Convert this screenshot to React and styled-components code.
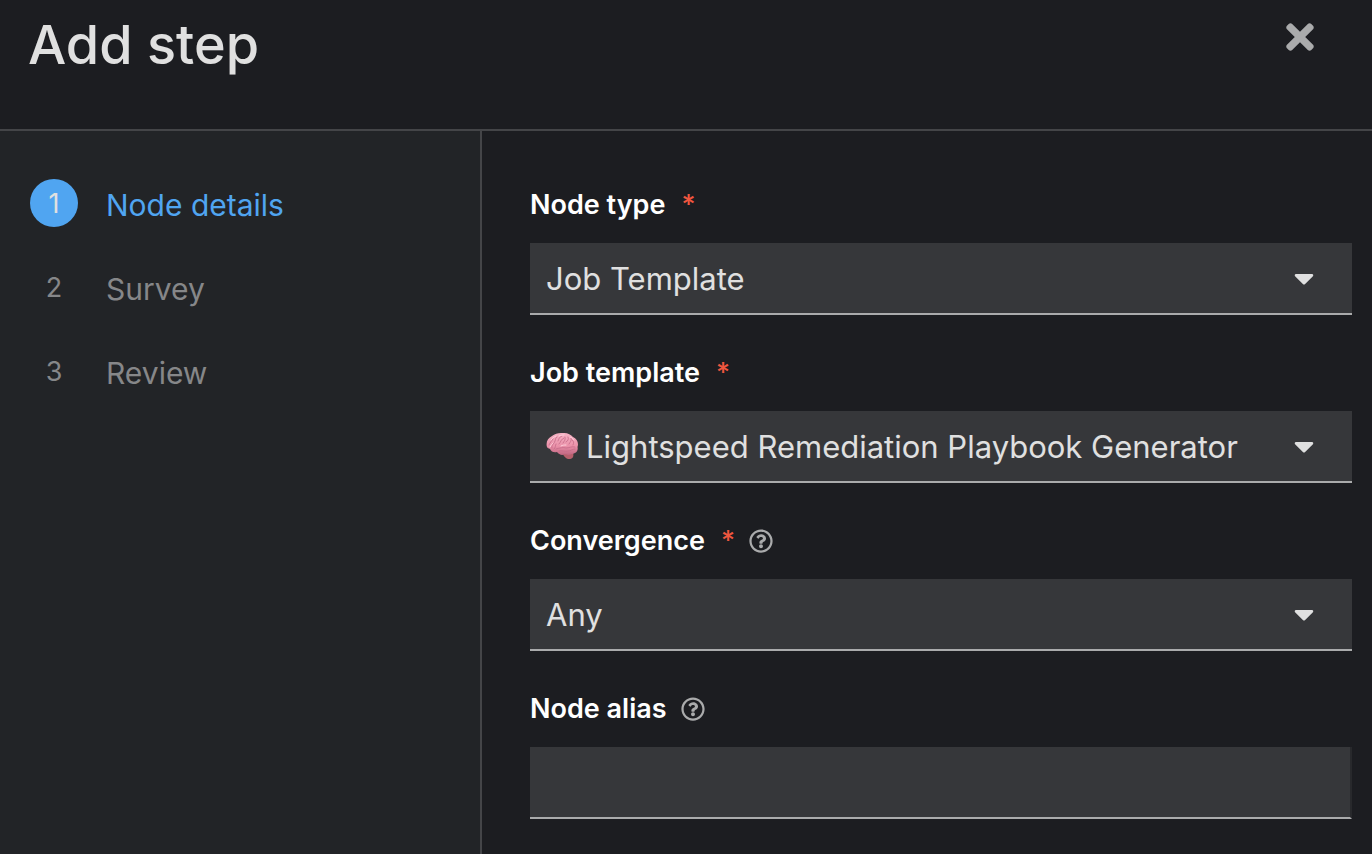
import React, { useState } from "react";
import styled, { createGlobalStyle } from "styled-components";
import { FaTimes, FaCaretDown, FaRegQuestionCircle } from "react-icons/fa";

const GlobalStyle = createGlobalStyle`
  *, *::before, *::after { box-sizing: border-box; }
  body {
    margin: 0;
    background: #1c1d21;
    color: #e0e0e0;
    font-family: Inter, "Liberation Sans", sans-serif;
  }
  button, input, select { font: inherit; color: inherit; }
`;

const Wizard = styled.div`
  display: flex;
  flex-direction: column;
  min-height: 100vh;
`;

const Header = styled.header`
  display: flex;
  align-items: flex-start;
  justify-content: space-between;
  padding: 12px 48px 52px 28px;
  border-bottom: 2px solid #444548;
`;

const Title = styled.h1`
  margin: 0;
  font-size: 54px;
  line-height: 65px;
  font-weight: 500;
`;

const CloseButton = styled.button`
  display: flex;
  justify-content: center;
  width: 48px;
  padding: 5px 0;
  border: 0;
  background: none;
  color: #aaabac;
  font-size: 40px;
  cursor: pointer;
`;

const Body = styled.div`
  display: flex;
  flex: 1;
`;

const Sidebar = styled.nav`
  flex: 0 0 482px;
  padding: 48px 30px;
  background: #222427;
  border-right: 2px solid #444548;
`;

const StepList = styled.ol`
  display: flex;
  flex-direction: column;
  gap: 36px;
  margin: 0;
  padding: 0;
  list-style: none;
`;

const StepButton = styled.button`
  display: flex;
  align-items: center;
  gap: 28px;
  padding: 0;
  border: 0;
  background: none;
  color: ${(p) => (p.$current ? "#50a5f1" : "#868789")};
  font-size: 30px;
  cursor: pointer;
`;

const StepNumber = styled.span`
  width: 48px;
  height: 48px;
  border-radius: 50%;
  background: ${(p) => (p.$current ? "#50a5f1" : "transparent")};
  color: ${(p) => (p.$current ? "#e0e0e0" : "inherit")};
  font-size: 27px;
  line-height: 50px;
  text-align: center;
`;

const StepName = styled.span`
  padding-top: 4px;
  line-height: 44px;
`;

const Form = styled.form`
  display: flex;
  flex: 1;
  min-width: 0;
  flex-direction: column;
  gap: 32px;
  padding: 48px 20px 32px 48px;
`;

const LabelRow = styled.div`
  display: flex;
  align-items: center;
  gap: 14px;
  height: 48px;
  margin-bottom: 16px;
  padding-top: 4px;
`;

const Label = styled.label`
  color: #fff;
  font-size: 27px;
  line-height: 32px;
  font-weight: 600;
`;

const Required = styled.span`
  margin-left: 16px;
  color: #f0563f;
  font-weight: 500;
`;

const HelpButton = styled.button`
  display: flex;
  padding: 0;
  border: 0;
  background: none;
  color: #aaabac;
  font-size: 24px;
  cursor: pointer;
`;

const SelectBox = styled.div`
  display: grid;
  align-items: center;
  height: 72px;
  background: #36373a;
  border-bottom: 2px solid #aaabac;

  > * { grid-area: 1 / 1; }
  > svg { pointer-events: none; }
`;

const Select = styled.select`
  width: 100%;
  height: 70px;
  padding: 0 64px 0 ${(p) => (p.$withIcon ? 56 : 16)}px;
  border: 0;
  border-radius: 0;
  appearance: none;
  background: transparent;
  font-size: 31px;

  option { background: #36373a; }
`;

const Caret = styled(FaCaretDown)`
  justify-self: end;
  margin-right: 32px;
  font-size: 32px;
`;

const BrainSvg = styled.svg`
  width: 32px;
  height: 32px;
  margin-left: 16px;
`;

const TextInput = styled.input`
  display: block;
  width: 100%;
  height: 72px;
  padding: 0 16px;
  border: 0;
  border-right: 2px solid #28292c;
  border-bottom: 2px solid #aaabac;
  border-radius: 0;
  background: #36373a;
  font-size: 31px;
`;

function BrainIcon() {
  return (
    <BrainSvg viewBox="0 0 32 32" aria-hidden="true">
      <defs>
        <linearGradient id="brain" x1="0" y1="0" x2="0" y2="1">
          <stop offset="0" stopColor="#f5b3c4" />
          <stop offset="0.6" stopColor="#ea91a9" />
          <stop offset="1" stopColor="#bf6580" />
        </linearGradient>
      </defs>
      <path d="M17 24c1 3 4 5.500 7 5 3-.5 4-3 3-6z" fill="#b8606d" />
      <path
        d="M1 17C-.5 12 2 8 6 6c3-2.500 7-3.500 11-3 4-.5 8 1.500 10 4 4 2 6 6 4.500 10 1 4-2 7-6 7-2 1.500-5 1-6.500 0-3 2-6 .5-8-2-3 1-6-.5-7-3-1.500-.5-2.500-1-3-2z"
        fill="url(#brain)"
      />
      <g fill="none" stroke="#c46b88" strokeWidth="0.8" strokeLinecap="round">
        <path d="M3 15c1-3 3-4 4-6M6 18c-1-3 2-4 3-7 1-2 0-3 2-4M10 14c-1 2 0 3-2 5M12 11c1-2 1-4 4-5M13 14c2-2 2-5 5-6M17 13c1-2 3-3 2-6M20 12c2-1 3-3 2-5M23 14c1-2 3-3 2-6M27 15c1-2 1-4-1-5" />
        <path d="M10 19c4-1 7-2 10-1 3 0 6-2 9-1M13 21c3-1 6 1 9 0 3 0 4-2 7-2" />
      </g>
      <path
        d="M5 10c1-2 3-3 5-4M13 6c2-1 4-1 5-1M24 7c2 0 3 2 4 3M4 17c1-2 2-3 3-4M15 16c2-1 3-1 5-1"
        fill="none"
        stroke="#ffd3dd"
        strokeWidth="1"
        strokeLinecap="round"
      />
    </BrainSvg>
  );
}

function Field({ id, label, required, help, children }) {
  return (
    <div>
      <LabelRow>
        <Label htmlFor={id}>
          {label}
          {required && <Required aria-hidden="true">*</Required>}
        </Label>
        {help && (
          <HelpButton type="button" aria-label={`More info about ${label}`}>
            <FaRegQuestionCircle />
          </HelpButton>
        )}
      </LabelRow>
      {children}
    </div>
  );
}

function SelectField({ id, label, help, icon, options }) {
  return (
    <Field id={id} label={label} help={help} required>
      <SelectBox>
        <Select id={id} required $withIcon={Boolean(icon)}>
          {options.map((o) => (
            <option key={o}>{o}</option>
          ))}
        </Select>
        {icon}
        <Caret aria-hidden="true" />
      </SelectBox>
    </Field>
  );
}

const steps = ["Node details", "Survey", "Review"];

export default function App() {
  const [current, setCurrent] = useState(0);
  return (
    <Wizard>
      <GlobalStyle />
      <Header>
        <Title>Add step</Title>
        <CloseButton type="button" aria-label="Close">
          <FaTimes />
        </CloseButton>
      </Header>
      <Body>
        <Sidebar aria-label="Steps">
          <StepList>
            {steps.map((name, i) => (
              <li key={name}>
                <StepButton
                  type="button"
                  $current={i === current}
                  aria-current={i === current ? "step" : undefined}
                  onClick={() => setCurrent(i)}
                >
                  <StepNumber $current={i === current}>{i + 1}</StepNumber>
                  <StepName>{name}</StepName>
                </StepButton>
              </li>
            ))}
          </StepList>
        </Sidebar>
        <Form>
          <SelectField id="node-type" label="Node type" options={["Job Template"]} />
          <SelectField
            id="job-template"
            label="Job template"
            icon={<BrainIcon />}
            options={["Lightspeed Remediation Playbook Generator"]}
          />
          <SelectField id="convergence" label="Convergence" help options={["Any"]} />
          <Field id="node-alias" label="Node alias" help>
            <TextInput id="node-alias" type="text" />
          </Field>
        </Form>
      </Body>
    </Wizard>
  );
}
